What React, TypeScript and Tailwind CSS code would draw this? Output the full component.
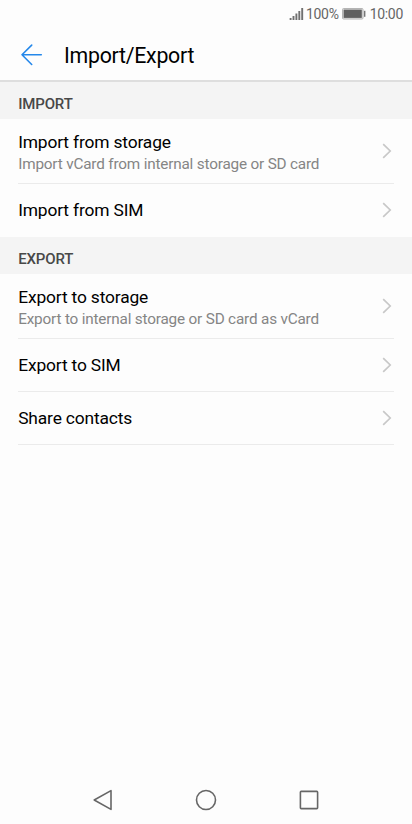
interface Item {
  title: string;
  detail?: string;
}

interface SectionProps {
  label: string;
  items: Item[];
  lastDivider?: boolean;
}

const IMPORT_ITEMS: Item[] = [
  { title: "Import from storage", detail: "Import vCard from internal storage or SD card" },
  { title: "Import from SIM" },
];

const EXPORT_ITEMS: Item[] = [
  { title: "Export to storage", detail: "Export to internal storage or SD card as vCard" },
  { title: "Export to SIM" },
  { title: "Share contacts" },
];

function StatusBar() {
  return (
    <div className="flex h-7 items-center justify-end pr-[9px] text-[14px] leading-none tracking-[-0.3px] text-[#666]">
      <svg width="15" height="14" viewBox="0 0 15 14" className="mr-[2px]" stroke="#707070" strokeWidth="1.9">
        <path d="M1.6 11v2M4.5 9v4M7.4 6.5v6.5M10.3 4v9M13.2 1v12" />
      </svg>
      <span>100%</span>
      <svg width="24" height="12" viewBox="0 0 24 12" className="ml-[3px] mr-[4px]">
        <rect x="0.5" y="0.5" width="20.5" height="10.5" rx="1" fill="#e4e4e4" stroke="#b4b4b4" />
        <rect x="1.6" y="1.6" width="18.2" height="8.3" fill="#606060" />
        <rect x="21.9" y="2.8" width="1.5" height="6" fill="#777" />
      </svg>
      <span>10:00</span>
    </div>
  );
}

function Header() {
  return (
    <header className="flex h-[54px] items-center border-b-2 border-[#dedede] pl-5">
      <button type="button" aria-label="Back" className="mt-[2px]">
        <svg width="24" height="24" viewBox="0 0 24 24" fill="none" stroke="#2588ea" strokeWidth="1.6" strokeLinecap="round" strokeLinejoin="round">
          <path d="M21.3 11.8H2M11.7 2.1 2 11.8l9.7 9.7" />
        </svg>
      </button>
      <h1 className="ml-5 mt-1 text-[21.3px] leading-6 tracking-[-0.26px] text-black">Import/Export</h1>
    </header>
  );
}

function Row({ title, detail }: Item) {
  return (
    <div className={`flex items-center justify-between ${detail ? "h-16" : "h-[52px]"}`}>
      <div className={detail ? "pt-[3px]" : ""}>
        <div className="text-[17.4px] leading-[22px] tracking-[-0.16px] text-black">{title}</div>
        {detail && <div className="text-[15.3px] leading-[22px] tracking-[-0.18px] text-[#858585]">{detail}</div>}
      </div>
      <svg width="12" height="16" viewBox="0 0 12 16" fill="none" stroke="#c8c8c8" strokeWidth="1.7">
        <path d="M1.2 1.2 8.2 8l-7 6.8" />
      </svg>
    </div>
  );
}

function Section({ label, items, lastDivider }: SectionProps) {
  return (
    <section className={lastDivider ? "" : "pb-px"}>
      <h2 className="flex h-[37px] items-center bg-[#f4f4f4] pl-[18.2px] pt-[8px] text-[15px] font-medium tracking-[-0.15px] text-[#484848]">
        {label}
      </h2>
      <div className="ml-[18.2px] mr-[18px]">
        {items.map((item, i) => (
          <div key={item.title} className={i < items.length - 1 || lastDivider ? "border-b border-[#ebebeb]" : ""}>
            <Row {...item} />
          </div>
        ))}
      </div>
    </section>
  );
}

function NavBar() {
  return (
    <nav className="mt-auto flex h-12 items-center justify-center gap-[79px] text-[#666]">
      <svg width="24" height="24" viewBox="0 0 24 24" fill="none" stroke="currentColor" strokeWidth="1.6" strokeLinejoin="round">
        <path d="M20 2.6v18.8L3.2 12z" />
      </svg>
      <svg width="24" height="24" viewBox="0 0 24 24" fill="none" stroke="currentColor" strokeWidth="1.6">
        <circle cx="12" cy="12" r="9.5" />
      </svg>
      <svg width="24" height="24" viewBox="0 0 24 24" fill="none" stroke="currentColor" strokeWidth="1.6">
        <rect x="3.4" y="3.4" width="17.2" height="17.2" rx="0.8" />
      </svg>
    </nav>
  );
}

export default function App() {
  return (
    <div className="flex h-screen flex-col bg-[#fdfdfd] font-['Roboto',sans-serif]">
      <StatusBar />
      <Header />
      <Section label="IMPORT" items={IMPORT_ITEMS} />
      <Section label="EXPORT" items={EXPORT_ITEMS} lastDivider />
      <NavBar />
    </div>
  );
}
